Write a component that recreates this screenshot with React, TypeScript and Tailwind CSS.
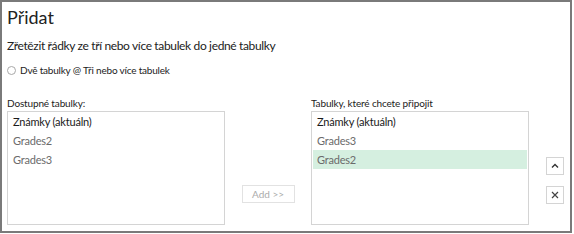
import React from "react"

const FONT = { fontFamily: 'Lato, "Liberation Sans", sans-serif' }

const LEFT_ITEMS = [
  { label: "Známky (aktuáln)", current: true },
  { label: "Grades2" },
  { label: "Grades3" },
]

const RIGHT_ITEMS = [
  { label: "Známky (aktuáln)", current: true },
  { label: "Grades3" },
  { label: "Grades2", selected: true },
]

type Item = { label: string; current?: boolean; selected?: boolean }

function TableList({ items }: { items: Item[] }) {
  return (
    <div className="w-[218px] h-[114px] border border-[#d4d4d4] bg-white px-[1px]">
      {items.map((it) => (
        <div
          key={it.label}
          className={
            "h-[19px] px-[4px] flex items-center text-[11px] tracking-[-0.2px] leading-none " +
            (it.current ? "text-[#1a1a1a] " : "text-[#6b6b6b] ") +
            (it.selected ? "bg-[#d5efe0]" : "")
          }
        >
          {it.label}
        </div>
      ))}
    </div>
  )
}

export default function App() {
  return (
    <div className="w-[574px] h-[234px] bg-white" style={FONT}>
      <div className="w-[572px] h-[233px] border-2 border-[#7a7a7a] flex flex-col pl-[5px]">
        <h1 className="text-[18px] leading-none text-[#222] mt-[6px]">Přidat</h1>
        <p className="text-[12px] tracking-[-0.35px] leading-none text-[#222] mt-[14px]">
          Zřetězit řádky ze tří nebo více tabulek do jedné tabulky
        </p>
        <label className="flex items-center gap-[4px] mt-[13px] text-[10px] tracking-[-0.2px] leading-none text-[#222]">
          <span className="w-[9px] h-[9px] rounded-full border border-[#a8a8a8] bg-white" />
          Dvě tabulky @ Tři nebo více tabulek
        </label>

        <div className="flex mt-[23px]">
          {/* available tables */}
          <div className="flex flex-col">
            <span className="text-[10px] tracking-[-0.15px] leading-none text-[#222] mb-[3px]">Dostupné tabulky:</span>
            <TableList items={LEFT_ITEMS} />
          </div>

          <div className="w-[86px] flex items-end justify-center pb-[22px]">
            <button className="w-[53px] h-[18px] border border-[#e2e2e2] bg-white text-[10px] leading-none text-[#ababab]">
              Add &gt;&gt;
            </button>
          </div>

          {/* tables to append */}
          <div className="flex flex-col">
            <span className="text-[10px] tracking-[-0.15px] leading-none text-[#222] mb-[3px]">Tabulky, které chcete připojit</span>
            <TableList items={RIGHT_ITEMS} />
          </div>

          <div className="flex flex-col gap-[11px] ml-[17px] mt-[59px]">
            <button className="w-[18px] h-[18px] border border-[#d4d4d4] bg-white flex items-center justify-center">
              <svg width="8" height="6" viewBox="0 0 8 6">
                <path d="M1 4.5 L4 1.5 L7 4.5" fill="none" stroke="#333" strokeWidth="1.4" />
              </svg>
            </button>
            <button className="w-[18px] h-[18px] border border-[#d4d4d4] bg-white flex items-center justify-center">
              <svg width="8" height="8" viewBox="0 0 8 8">
                <path d="M1 1 L7 7 M7 1 L1 7" fill="none" stroke="#444" strokeWidth="1.2" />
              </svg>
            </button>
          </div>
        </div>
      </div>
    </div>
  )
}
